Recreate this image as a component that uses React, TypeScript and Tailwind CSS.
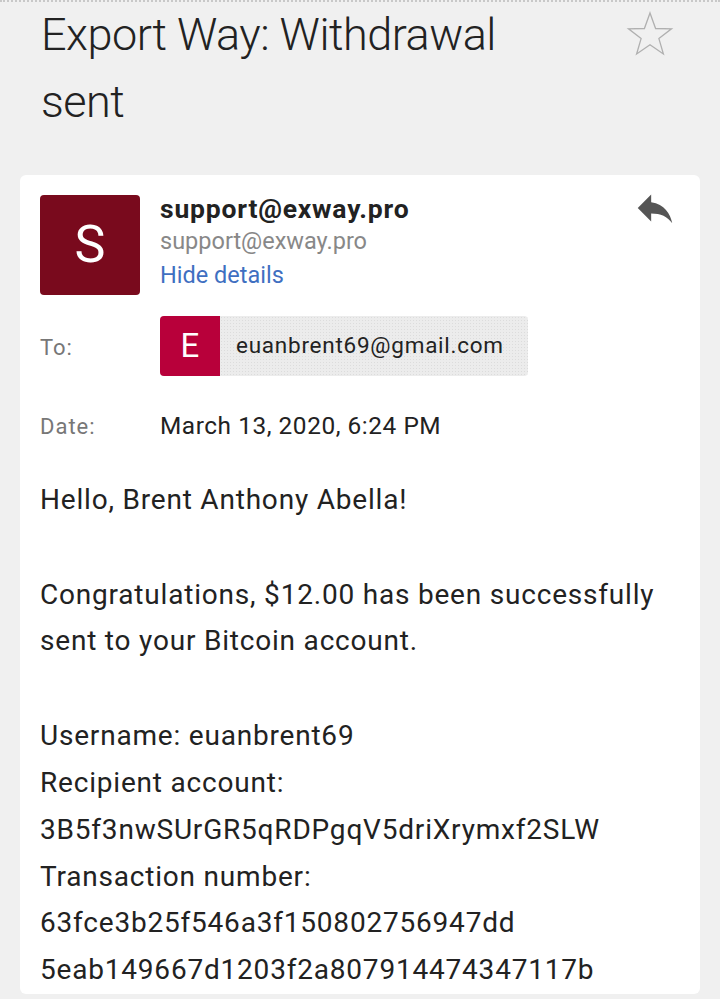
import React from "react";

export default function App() {
  return (
    <div
      className="w-[720px] h-[999px] overflow-hidden bg-[#f0f0f0] border-t-2 border-dotted border-[#c8c8c8] flex flex-col"
      style={{ fontFamily: "Roboto, 'Noto Sans', sans-serif" }}
    >
      <div className="flex justify-between pl-[41px] pr-[46px]">
        <h1 className="text-[45px] font-light leading-[67px] tracking-[-0.5px] text-[#222] w-[500px] mt-[-1px]">
          Export Way: Withdrawal sent
        </h1>
        <svg width="48" height="48" viewBox="0 0 48 48" className="mt-[8px]">
          <polygon
            points="24,3 29.6,18.5 45.5,18.8 32.9,28.6 37.4,44 24,34.8 10.6,44 15.1,28.6 2.5,18.8 18.4,18.5"
            fill="none"
            stroke="#b0b0b0"
            strokeWidth="1.3"
            strokeLinejoin="miter"
          />
        </svg>
      </div>
      <div className="mt-[40px] mx-[20px] bg-white rounded-[6px] flex-1 mb-[9px] px-[20px] pt-[20px]">
        <div className="flex">
          <div className="w-[100px] h-[100px] rounded-[4px] bg-[#790a1d] flex items-center justify-center text-white text-[52px] leading-none shrink-0">
            S
          </div>
          <div className="ml-[20px] flex-1 flex flex-col mt-[-3px]">
            <div className="text-[26.5px] font-bold tracking-[0.8px] text-[#222] leading-[33px]">support@exway.pro</div>
            <div className="text-[23.5px] text-[#888] leading-[33px]">support@exway.pro</div>
            <div className="text-[23.5px] text-[#3f6fc1] leading-[35px]">Hide details</div>
          </div>
          <svg width="46" height="46" viewBox="0 0 24 24" className="mt-[-10px] mr-[2px]">
            <path d="M10 9V5l-7 7 7 7v-4.1c5 0 8.5 1.6 11 5.1-1-5-4-10-11-11z" fill="#555" />
          </svg>
        </div>
        <div className="flex items-center mt-[21px]">
          <div className="w-[120px] text-[22px] tracking-[1px] text-[#777] mt-[3px]">To:</div>
          <div className="flex h-[60px] rounded-[4px] overflow-hidden bg-[#ececec] bg-[radial-gradient(#dcdcdc_0.6px,transparent_0.8px)] bg-[length:3px_3px]">
            <div className="w-[60px] h-[60px] bg-[#b8003a] text-white text-[33px] flex items-center justify-center">E</div>
            <div className="pl-[16px] pr-[24px] flex items-center text-[22.5px] tracking-[0.75px] text-[#222]">euanbrent69@gmail.com</div>
          </div>
        </div>
        <div className="flex items-center mt-[32px]">
          <div className="w-[120px] text-[22px] tracking-[1px] text-[#777]">Date:</div>
          <div className="text-[24.4px] tracking-[0.55px] text-[#222]">March 13, 2020, 6:24 PM</div>
        </div>
        <div className="mt-[32px] text-[28px] tracking-[0.8px] leading-[46.9px] text-[#222]">
          <div>Hello, Brent Anthony Abella!</div>
          <div className="h-[48px]" />
          <div>Congratulations, $12.00 has been successfully</div>
          <div>sent to your Bitcoin account.</div>
          <div className="h-[47.5px]" />
          <div>Username: euanbrent69</div>
          <div>Recipient account:</div>
          <div>3B5f3nwSUrGR5qRDPgqV5driXrymxf2SLW</div>
          <div>Transaction number:</div>
          <div>63fce3b25f546a3f150802756947dd</div>
          <div>5eab149667d1203f2a807914474347117b</div>
        </div>
      </div>
    </div>
  );
}
